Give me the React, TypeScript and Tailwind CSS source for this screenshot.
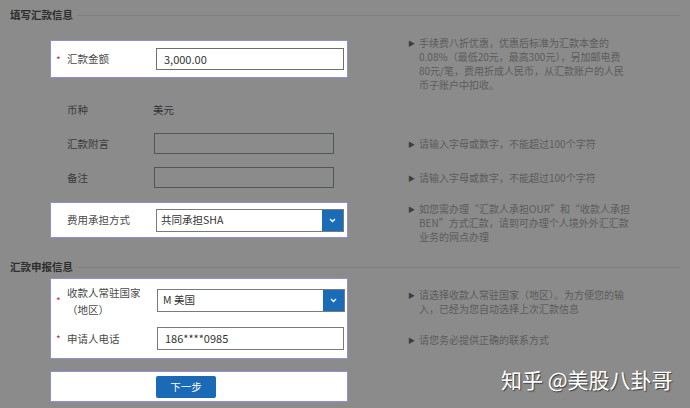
import React from 'react';

const font = { fontFamily: '"Noto Sans CJK SC", "Noto Sans", sans-serif' };

const Hint = ({ lines, className = '' }: { lines: string[]; className?: string }) => (
  <div className={`flex items-start ml-[60px] text-[10px] leading-[14px] text-[#5c5c5c] ${className}`}>
    <span className="w-[11px] text-[7px] text-[#3e3e3e] leading-[14px]">▶</span>
    <div>
      {lines.map((l, i) => (
        <div key={i} className="whitespace-nowrap">{l}</div>
      ))}
    </div>
  </div>
);

const Section = ({ title }: { title: string }) => (
  <div className="flex items-center h-[20px] pl-[10px] pr-[10px]">
    <span className="text-[10.5px] font-bold text-[#2e2e2e] whitespace-nowrap">{title}</span>
    <div className="flex-1 h-px bg-[#7f7f7f] ml-[4px]" />
  </div>
);

const Star = () => <span className="w-[11px] text-[#c0392b] text-[10px]">*</span>;

const Chevron = () => (
  <div className="w-[21px] h-full bg-[#1b6cb7] flex items-center justify-center">
    <svg width="7" height="5" viewBox="0 0 7 5">
      <path d="M1 1 L3.5 3.5 L6 1" stroke="white" strokeWidth="1.3" fill="none" />
    </svg>
  </div>
);

export default function App() {
  return (
    <div className="w-[690px] h-[408px] bg-[#8b8b8b] overflow-hidden relative" style={font}>
      <div className="pt-[5px]">
        <Section title="填写汇款信息" />
      </div>

      {/* 汇款金额 */}
      <div className="flex items-start mt-[11px] h-[54px]">
        <div className="ml-[50px] w-[298px] h-[38px] mt-[4px] bg-white border border-[#8d91d3] flex items-center pl-[5px]">
          <Star />
          <span className="w-[89px] text-[10.5px] text-[#4a4a4a]">汇款金额</span>
          <div className="w-[188px] h-[22px] border border-[#6f6f6f] flex items-center pl-[7px] text-[11px] text-[#333]">
            3,000.00
          </div>
        </div>
        <Hint
          lines={[
            '手续费八折优惠，优惠后标准为汇款本金的',
            '0.08%（最低20元，最高300元），另加邮电费',
            '80元/笔，费用折成人民币，从汇款账户的人民',
            '币子账户中扣收。',
          ]}
        />
      </div>

      {/* 币种 */}
      <div className="flex items-center h-[20px] mt-[10px]">
        <span className="ml-[67px] w-[86px] text-[10.5px] text-[#3a3a3a]">币种</span>
        <span className="text-[10.5px] text-[#333]">美元</span>
      </div>

      {/* 汇款附言 */}
      <div className="flex items-center h-[21px] mt-[13px]">
        <div className="flex items-center w-[348px]">
          <span className="ml-[67px] w-[87px] text-[10.5px] text-[#3a3a3a]">汇款附言</span>
          <div className="w-[180px] h-[21px] border border-[#4f5558]" />
        </div>
        <Hint lines={['请输入字母或数字，不能超过100个字符']} />
      </div>

      {/* 备注 */}
      <div className="flex items-center h-[21px] mt-[13px]">
        <div className="flex items-center w-[348px]">
          <span className="ml-[67px] w-[87px] text-[10.5px] text-[#3a3a3a]">备注</span>
          <div className="w-[180px] h-[21px] border border-[#4f5558]" />
        </div>
        <Hint lines={['请输入字母或数字，不能超过100个字符']} />
      </div>

      {/* 费用承担方式 */}
      <div className="flex items-start mt-[14px] h-[42px]">
        <div className="ml-[50px] w-[298px] h-[36px] bg-white border border-[#8d91d3] flex items-center pl-[5px]">
          <span className="w-[11px]" />
          <span className="w-[89px] text-[10.5px] text-[#4a4a4a]">费用承担方式</span>
          <div className="w-[188px] h-[23px] border border-[#7a7a7a] flex items-center">
            <span className="flex-1 pl-[4px] text-[10.5px] text-[#333]">共同承担SHA</span>
            <Chevron />
          </div>
        </div>
        <Hint
          lines={[
            '如您需办理“汇款人承担OUR”和“收款人承担',
            'BEN”方式汇款，请到可办理个人境外外汇汇款',
            '业务的网点办理',
          ]}
        />
      </div>

      <div className="mt-[13px]">
        <Section title="汇款申报信息" />
      </div>

      {/* 汇款申报 */}
      <div className="flex items-start mt-[1px]">
        <div className="ml-[50px] w-[298px] h-[81px] bg-white border border-[#8d91d3] flex flex-col pl-[5px]">
          <div className="flex items-center mt-[8px] h-[26px]">
            <Star />
            <div className="w-[90px] text-[10.5px] text-[#4a4a4a] leading-[17px] pt-[2px]">
              <div>收款人常驻国家</div>
              <div>（地区）</div>
            </div>
            <div className="w-[188px] h-[23px] border border-[#7a7a7a] flex items-center">
              <span className="flex-1 pl-[5px] text-[10.5px] text-[#333]">M 美国</span>
              <Chevron />
            </div>
          </div>
          <div className="flex items-center mt-[14px] h-[23px]">
            <Star />
            <span className="w-[90px] text-[10.5px] text-[#4a4a4a]">申请人电话</span>
            <div className="w-[187px] h-[23px] border border-[#7a7a7a] flex items-center pl-[7px] text-[11px] text-[#333]">
              186****0985
            </div>
          </div>
        </div>
        <div className="flex flex-col">
          <Hint
            className="mt-[10px]"
            lines={['请选择收款人常驻国家（地区）。为方便您的输', '入，已经为您自动选择上次汇款信息']}
          />
          <Hint className="mt-[17px]" lines={['请您务必提供正确的联系方式']} />
        </div>
      </div>

      {/* 下一步 */}
      <div className="ml-[50px] mt-[12px] w-[298px] h-[31px] bg-white border border-[#8d91d3] flex items-center pl-[105px]">
        <button className="w-[60px] h-[22px] bg-[#1a6ab5] rounded-[2px] text-white text-[10.5px] flex items-center justify-center">
          下一步
        </button>
      </div>

      {/* watermark */}
      <div
        className="absolute left-[501px] top-[364px] text-white text-[21px] whitespace-nowrap"
        style={{ textShadow: '1px 1px 1px rgba(0,0,0,0.55)' }}
      >
        知乎 @美股八卦哥
      </div>
    </div>
  );
}
